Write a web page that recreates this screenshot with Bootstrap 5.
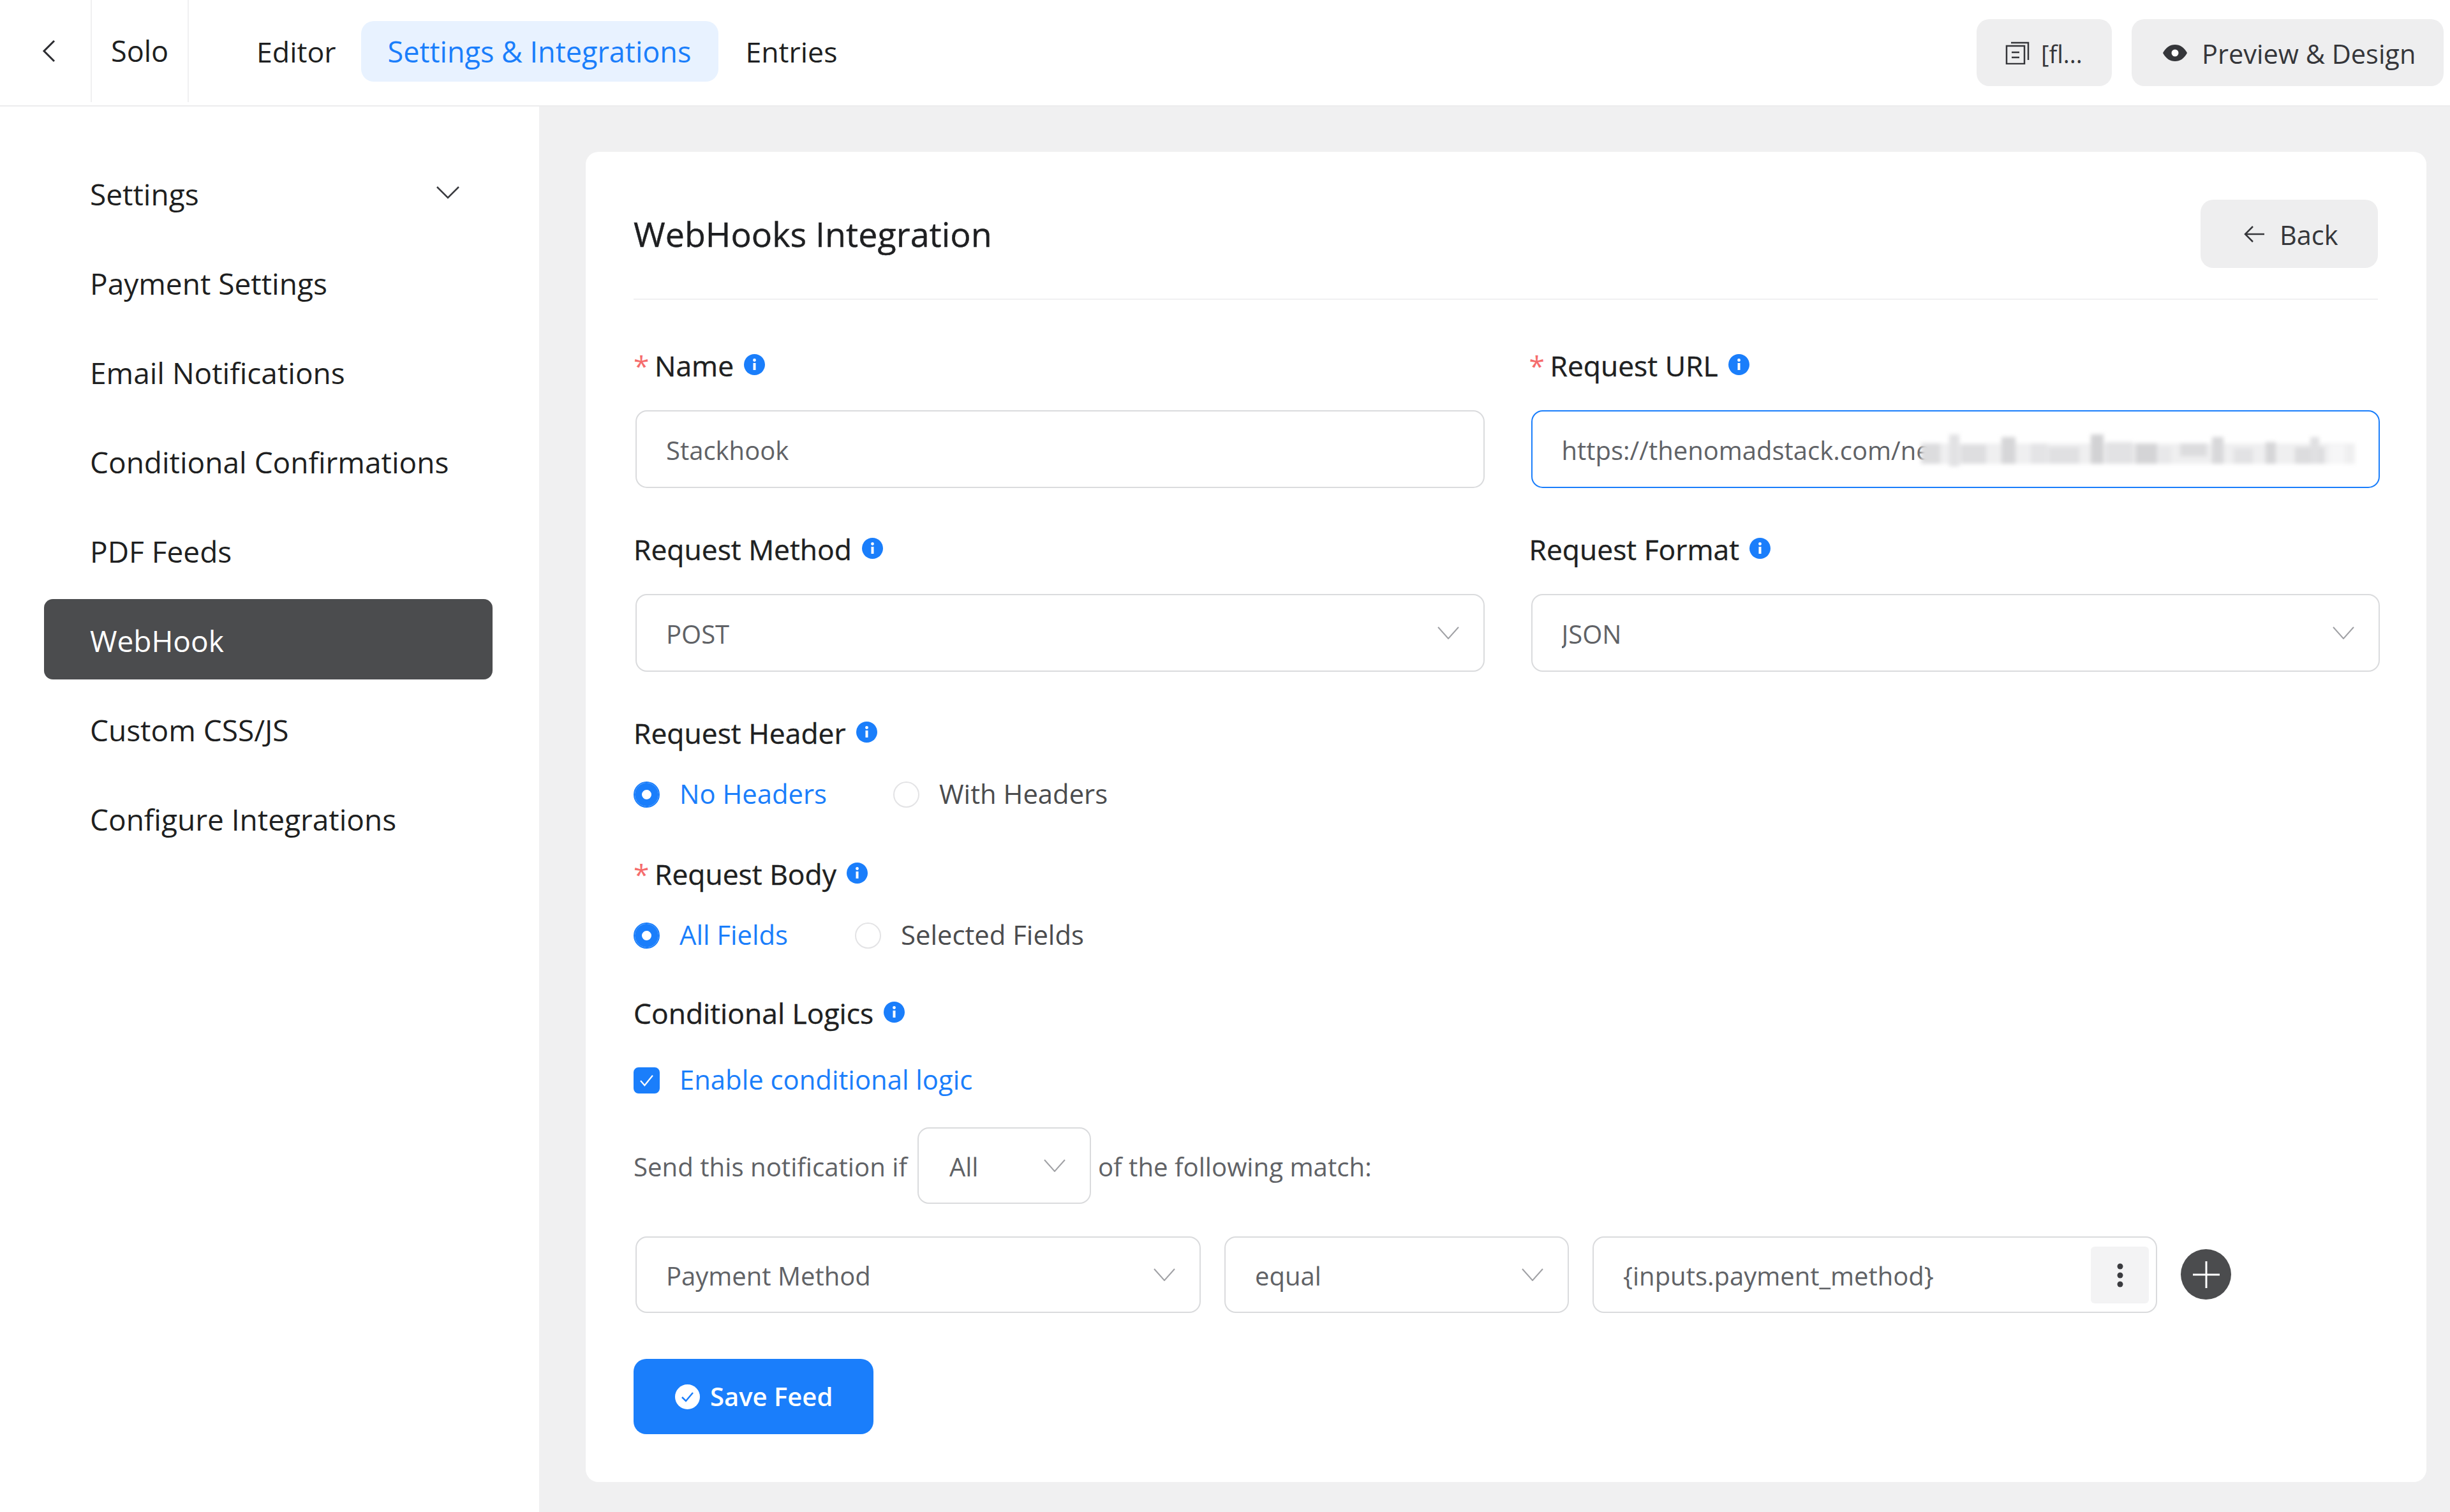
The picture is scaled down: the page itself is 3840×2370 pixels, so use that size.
<!DOCTYPE html>
<html lang="en">
<head>
<meta charset="UTF-8">
<title>WebHooks Integration</title>
<link href="https://cdn.jsdelivr.net/npm/bootstrap@5.3.3/dist/css/bootstrap.min.css" rel="stylesheet">
<style>
    html, body{ margin: 0; }
    body{
        width: 3840px;
        height: 2370px;
        overflow: hidden;
        background-color: #f0f0f1;
        font-family: "Open Sans", "Noto Sans", sans-serif;
        font-size: 45px;
        color: #1e1f21;
    }
    /* top bar */
    .topbar{ height: 167px; background: #fff; border-bottom: 2px solid #ececed; }
    .top-cell{ display: flex; align-items: center; border-right: 2px solid #f0f0f1; height: 160px; }
    .top-back{ width: 144px; padding-left: 66px; }
    .top-solo{ width: 152px; padding-left: 30px; }
    .top-tabs{ margin-left: 64px; margin-top: 33px; height: 95px; }
    .top-tabs .nav-link{
        height: 95px; padding: 0 42px; display: flex; align-items: center;
        color: #1e1f21; border-radius: 20px; font-size: 44.7px;
    }
    .top-tabs .nav-link.active{ background: #e8f2ff; color: #1a7efb; font-size: 45px; padding: 0 43px 0 42px; }
    .tab-editor{ margin-right: -3px; }
    .top-actions{ margin-left: auto; padding: 30px 10px 0 0; gap: 31px; }
    .grey-btn{
        display: inline-flex; align-items: center; height: 105px; border: 0;
        border-radius: 20px; background: #eeeeef; color: #35363a; font-size: 41.5px;
    }
    .grey-btn span{ padding-top: 3px; }
    .btn-file{ width: 212px; padding: 0 0 0 45px; gap: 18px; font-size: 38px; }
    .btn-preview{ width: 489px; padding: 0 0 0 48px; gap: 22px; }
    /* sidebar */
    .page-wrap{ height: 2203px; }
    .side-nav{ width: 845px; background: #fff; padding: 72px 73px 0 69px; flex-shrink: 0; }
    .side-nav .nav-link{
        height: 126px; margin-bottom: 14px; padding: 4px 0 0 72px; display: flex; align-items: center;
        color: #1e1f21; font-size: 46px; border-radius: 14px;
    }
    .side-nav .nav-link.active{ background: #4b4c4e; color: #fff; }
    .side-arrow{ margin-left: auto; margin-right: 52px; margin-top: -4px; }
    /* main card */
    .main-area{ flex: 1; padding: 71px 37px 0 73px; }
    .form-panel{ height: 2085px; background: #fff; border-radius: 20px; padding: 75px 73px 0 75px; }
    .panel-head{ height: 157px; margin-right: 3px; border-bottom: 2px solid #f0f0f1; align-items: flex-start; justify-content: space-between; }
    .panel-title{ font-size: 53.8px; font-weight: 500; line-height: 107px; margin: 0; -webkit-text-stroke: .4px #1e1f21; }
    .btn-goback{ width: 278px; padding-left: 68px; gap: 24px; height: 107px; }
    .field-row{ --bs-gutter-x: 70px; --bs-gutter-y: 0; }
    .field-label{
        display: flex; align-items: center; height: 60px; margin-bottom: 40px;
        font-size: 44.4px; font-weight: 500; gap: 16px; color: #1e1f21; -webkit-text-stroke: .4px #1e1f21;
    }
    .field-label svg{ margin-top: -4px; }
    .req-star{ color: #f56c6c; font-weight: 400; margin-right: -3px; -webkit-text-stroke: 0; }
    .gap-a{ margin-top: 73px; }
    .gap-b{ margin-top: 66px; }
    .gap-c{ margin-top: 63px; }
    .gap-c .field-label{ margin-bottom: 44px; }
    .field-input{
        display: block; width: calc(100% - 3px); margin-left: 3px; height: 122px; padding: 3px 46px 0;
        border: 2px solid #dadbdd; border-radius: 18px; font-size: 40px; color: #606266;
        background-color: #fff; box-shadow: none;
    }
    .field-input.form-select{
        padding-right: 90px;
        background-image: url("data:image/svg+xml,%3Csvg xmlns='http://www.w3.org/2000/svg' viewBox='0 0 34 20'%3E%3Cpath d='M1 1l16 18L33 1' fill='none' stroke='%23a0a1a5' stroke-width='2'/%3E%3C/svg%3E");
        background-position: right 38px center;
        background-size: 34px 20px;
    }
    .url-input{ border-color: #1a7efb; }
    .url-input-wrap{ position: relative; }
    .url-blur{ position: absolute; left: 614px; top: 38px; filter: blur(3px); }
    /* radios */
    .pick-row{ display: flex; align-items: center; height: 60px; font-size: 41.8px; margin-bottom: 0; }
    .pick-row .form-check{ display: flex; align-items: center; gap: 31px; margin: 0; padding: 0; min-height: 0; }
    .pick-row .form-check-input{
        width: 41px; height: 41px; margin: 3px 0 0; float: none; border: 2px solid #e3e3e5; flex-shrink: 0;
    }
    .pick-row .form-check-input:checked{ background-color: #1a7efb; border-color: #1a7efb; }
    .pick-row .form-check-input[type=radio]:checked{
        background-image: none; box-shadow: inset 0 0 0 11px #1a7efb; background-color: #fff;
    }
    .pick-row .form-check-input[type=checkbox]{ border-radius: 8px; }
    .pick-row .form-check-input[type=checkbox]:checked{
        background-image: url("data:image/svg+xml,%3Csvg xmlns='http://www.w3.org/2000/svg' viewBox='0 0 41 41'%3E%3Cpath d='M10 21l7 8 14-17' fill='none' stroke='%23fff' stroke-width='2.5'/%3E%3C/svg%3E");
        background-size: 100% 100%;
    }
    .pick-row .form-check-label{ color: #4b4c4e; }
    .pick-row .form-check-input:checked + .form-check-label{ color: #1a7efb; }
    .pick-gap{ margin-left: 104px !important; }
    .pick-first{ margin-top: -5px; }
    .pick-second{ margin-top: -5px; }
    .pick-second .pick-gap{ margin-left: 105px !important; }
    .send-row{ margin-top: 45px; height: 120px; font-size: 40.2px; color: #606266; }
    .send-row > span{ padding-top: 5px; }
    .send-select{ width: 272px !important; height: 120px; margin: 0 11px 0 16px; padding-left: 48px; color: #606266; flex-shrink: 0; }
    .logic-row{ margin-top: 51px; margin-left: 3px; gap: 37px; }
    .logic-row .field-input{ margin: 0; height: 120px; }
    .logic-col-a{ width: 886px; }
    .logic-col-b{ width: 540px; }
    .logic-col-c{ width: 885px; position: relative; }
    .kebab-box{
        position: absolute; right: 13px; top: 16px; width: 91px; height: 89px; background: #f3f3f4;
        border-radius: 6px; display: flex; align-items: center; justify-content: center;
    }
    .round-add{
        width: 79px; height: 79px; border-radius: 50%; background: #4b4c4e; border: 0; padding: 0;
        display: flex; align-items: center; justify-content: center; margin-top: 20px;
    }
    .btn-savefeed{
        margin-top: 72px; width: 376px; height: 118px; background: #1a7efb; border: 0; border-radius: 20px;
        color: #fff; font-size: 40px; font-weight: 600; display: flex; align-items: center; padding: 0 0 0 65px; gap: 16px;
    }
    .btn-savefeed:hover{ background: #1a7efb; color: #fff; }
</style>
</head>
<body>
    <!-- top bar -->
    <header class="topbar d-flex">
        <div class="top-cell top-back">
            <svg width="22" height="36" viewBox="0 0 22 36"><path d="M19 2L3 18l16 16" fill="none" stroke="#2b2c30" stroke-width="3"/></svg>
        </div>
        <div class="top-cell top-solo">Solo</div>
        <ul class="nav top-tabs">
            <li class="nav-item tab-editor"><a class="nav-link" href="#">Editor</a></li>
            <li class="nav-item"><a class="nav-link active" href="#">Settings &amp; Integrations</a></li>
            <li class="nav-item"><a class="nav-link" href="#">Entries</a></li>
        </ul>
        <div class="top-actions d-flex align-items-start">
            <button class="grey-btn btn-file" type="button">
                <svg width="38" height="36" viewBox="0 0 38 36" fill="none" stroke="#35363a" stroke-width="2.5"><rect x="2" y="7" width="28" height="28"/><path d="M9 2h27v27M10 17h12M10 25h12"/></svg>
                <span>[fl...</span>
            </button>
            <button class="grey-btn btn-preview" type="button">
                <svg width="40" height="28" viewBox="0 0 40 28"><path d="M1 14C6 5 12 1 20 1s14 4 19 13c-5 9-11 13-19 13S6 23 1 14z" fill="#35363a"/><circle cx="20" cy="14" r="5.5" fill="#fff"/></svg>
                <span>Preview &amp; Design</span>
            </button>
        </div>
    </header>

    <div class="page-wrap d-flex">
        <!-- sidebar -->
        <nav class="side-nav nav flex-column flex-nowrap">
            <a class="nav-link" href="#">Settings
                <svg class="side-arrow" width="36" height="20" viewBox="0 0 36 20"><path d="M1 1l17 17L35 1" fill="none" stroke="#3a3b3f" stroke-width="2.5"/></svg>
            </a>
            <a class="nav-link" href="#">Payment Settings</a>
            <a class="nav-link" href="#">Email Notifications</a>
            <a class="nav-link" href="#">Conditional Confirmations</a>
            <a class="nav-link" href="#">PDF Feeds</a>
            <a class="nav-link active" href="#">WebHook</a>
            <a class="nav-link" href="#">Custom CSS/JS</a>
            <a class="nav-link" href="#">Configure Integrations</a>
        </nav>

        <main class="main-area">
            <div class="form-panel">
                <div class="panel-head d-flex">
                    <h1 class="panel-title">WebHooks Integration</h1>
                    <button class="grey-btn btn-goback" type="button">
                        <svg width="32" height="28" viewBox="0 0 32 28"><path d="M14 2L2 14l12 12M2 14h30" fill="none" stroke="#35363a" stroke-width="2.5"/></svg>
                        <span>Back</span>
                    </button>
                </div>

                <div class="row field-row gap-a">
                    <div class="col-6">
                        <label class="field-label"><span><span class="req-star">*</span> Name</span>
                            <svg width="33" height="33" viewBox="0 0 33 33"><circle cx="16.5" cy="16.5" r="16.5" fill="#1a7efb"/><circle cx="16.5" cy="9.5" r="2.4" fill="#fff"/><rect x="14.5" y="14" width="4" height="11" fill="#fff"/></svg>
                        </label>
                        <input class="form-control field-input" type="text" value="Stackhook">
                    </div>
                    <div class="col-6">
                        <label class="field-label"><span><span class="req-star">*</span> Request URL</span>
                            <svg width="33" height="33" viewBox="0 0 33 33"><circle cx="16.5" cy="16.5" r="16.5" fill="#1a7efb"/><circle cx="16.5" cy="9.5" r="2.4" fill="#fff"/><rect x="14.5" y="14" width="4" height="11" fill="#fff"/></svg>
                        </label>
                        <div class="url-input-wrap">
                            <input class="form-control field-input url-input" type="text" value="https://thenomadstack.com/ne">
                            <svg class="url-blur" width="680" height="50" viewBox="0 0 680 50">
                                <rect y="14" width="680" height="32" fill="#efeff0"/>
                                <rect x="0" y="14" width="30" height="32" fill="#dcdcde"/>
                                <rect x="44" y="0" width="16" height="50" fill="#e2e2e4"/>
                                <rect x="62" y="16" width="40" height="30" fill="#dedee0"/>
                                <rect x="126" y="4" width="22" height="42" fill="#d6d6d8"/>
                                <rect x="172" y="14" width="26" height="32" fill="#e4e4e6"/>
                                <rect x="200" y="20" width="48" height="26" fill="#e0e0e2"/>
                                <rect x="266" y="0" width="20" height="46" fill="#d2d2d4"/>
                                <rect x="290" y="12" width="42" height="34" fill="#e2e2e4"/>
                                <rect x="336" y="14" width="34" height="32" fill="#d4d4d6"/>
                                <rect x="372" y="20" width="20" height="26" fill="#e8e8ea"/>
                                <rect x="406" y="14" width="42" height="20" fill="#dcdcde"/>
                                <rect x="456" y="4" width="18" height="42" fill="#d8d8da"/>
                                <rect x="490" y="22" width="30" height="24" fill="#e2e2e4"/>
                                <rect x="540" y="12" width="16" height="34" fill="#d6d6d8"/>
                                <rect x="586" y="20" width="46" height="26" fill="#dcdcde"/>
                                <rect x="610" y="4" width="14" height="42" fill="#e0e0e2"/>
                                <rect x="640" y="16" width="24" height="30" fill="#f6f6f7"/>
                            </svg>
                        </div>
                    </div>
                </div>

                <div class="row field-row gap-b">
                    <div class="col-6">
                        <label class="field-label"><span>Request Method</span>
                            <svg width="33" height="33" viewBox="0 0 33 33"><circle cx="16.5" cy="16.5" r="16.5" fill="#1a7efb"/><circle cx="16.5" cy="9.5" r="2.4" fill="#fff"/><rect x="14.5" y="14" width="4" height="11" fill="#fff"/></svg>
                        </label>
                        <select class="form-select field-input"><option>POST</option></select>
                    </div>
                    <div class="col-6">
                        <label class="field-label"><span>Request Format</span>
                            <svg width="33" height="33" viewBox="0 0 33 33"><circle cx="16.5" cy="16.5" r="16.5" fill="#1a7efb"/><circle cx="16.5" cy="9.5" r="2.4" fill="#fff"/><rect x="14.5" y="14" width="4" height="11" fill="#fff"/></svg>
                        </label>
                        <select class="form-select field-input"><option>JSON</option></select>
                    </div>
                </div>

                <div class="gap-b">
                    <label class="field-label"><span>Request Header</span>
                        <svg width="33" height="33" viewBox="0 0 33 33"><circle cx="16.5" cy="16.5" r="16.5" fill="#1a7efb"/><circle cx="16.5" cy="9.5" r="2.4" fill="#fff"/><rect x="14.5" y="14" width="4" height="11" fill="#fff"/></svg>
                    </label>
                    <div class="pick-row pick-first">
                        <div class="form-check">
                            <input class="form-check-input" type="radio" name="hdr" id="hdr1" checked>
                            <label class="form-check-label" for="hdr1">No Headers</label>
                        </div>
                        <div class="form-check pick-gap">
                            <input class="form-check-input" type="radio" name="hdr" id="hdr2">
                            <label class="form-check-label" for="hdr2">With Headers</label>
                        </div>
                    </div>
                </div>

                <div class="gap-b">
                    <label class="field-label"><span><span class="req-star">*</span> Request Body</span>
                        <svg width="33" height="33" viewBox="0 0 33 33"><circle cx="16.5" cy="16.5" r="16.5" fill="#1a7efb"/><circle cx="16.5" cy="9.5" r="2.4" fill="#fff"/><rect x="14.5" y="14" width="4" height="11" fill="#fff"/></svg>
                    </label>
                    <div class="pick-row pick-second">
                        <div class="form-check">
                            <input class="form-check-input" type="radio" name="body" id="body1" checked>
                            <label class="form-check-label" for="body1">All Fields</label>
                        </div>
                        <div class="form-check pick-gap">
                            <input class="form-check-input" type="radio" name="body" id="body2">
                            <label class="form-check-label" for="body2">Selected Fields</label>
                        </div>
                    </div>
                </div>

                <div class="gap-c">
                    <label class="field-label"><span>Conditional Logics</span>
                        <svg width="33" height="33" viewBox="0 0 33 33"><circle cx="16.5" cy="16.5" r="16.5" fill="#1a7efb"/><circle cx="16.5" cy="9.5" r="2.4" fill="#fff"/><rect x="14.5" y="14" width="4" height="11" fill="#fff"/></svg>
                    </label>
                    <div class="pick-row">
                        <div class="form-check">
                            <input class="form-check-input" type="checkbox" id="logic1" checked>
                            <label class="form-check-label" for="logic1">Enable conditional logic</label>
                        </div>
                    </div>
                </div>

                <div class="send-row d-flex align-items-center">
                    <span>Send this notification if</span>
                    <select class="form-select field-input send-select"><option>All</option></select>
                    <span>of the following match:</span>
                </div>

                <div class="logic-row d-flex align-items-start">
                    <div class="logic-col-a"><select class="form-select field-input w-100"><option>Payment Method</option></select></div>
                    <div class="logic-col-b"><select class="form-select field-input w-100"><option>equal</option></select></div>
                    <div class="logic-col-c">
                        <input class="form-control field-input w-100" type="text" value="{inputs.payment_method}">
                        <span class="kebab-box">
                            <svg width="12" height="38" viewBox="0 0 12 38" fill="#3a3b3f"><circle cx="6" cy="5" r="4.5"/><circle cx="6" cy="19" r="4.5"/><circle cx="6" cy="33" r="4.5"/></svg>
                        </span>
                    </div>
                    <button class="round-add" type="button" aria-label="Add">
                        <svg width="42" height="42" viewBox="0 0 42 42"><path d="M21 0v42M0 21h42" stroke="#fff" stroke-width="3"/></svg>
                    </button>
                </div>

                <button class="btn btn-savefeed" type="button">
                    <svg width="39" height="39" viewBox="0 0 39 39"><circle cx="19.5" cy="19.5" r="19.5" fill="#fff"/><path d="M11 20l6 6 11-13" fill="none" stroke="#1a7efb" stroke-width="2.5"/></svg>
                    <span>Save Feed</span>
                </button>
            </div>
        </main>
    </div>
<script src="https://cdn.jsdelivr.net/npm/bootstrap@5.3.3/dist/js/bootstrap.bundle.min.js"></script>
</body>
</html>
